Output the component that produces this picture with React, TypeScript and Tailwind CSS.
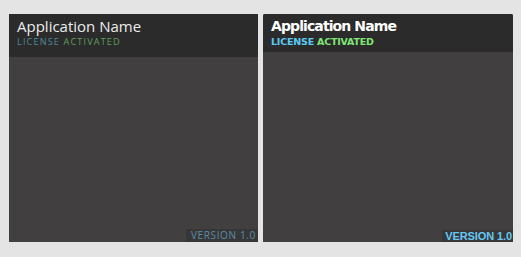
export default function App() {
  return (
    <div className="flex h-[257px] w-[521px] gap-[5px] bg-[#e4e4e4] pl-[9px] pt-[14px]">
      {/* flat skin */}
      <div className="flex h-[228px] w-[249px] flex-col bg-[#413f40]">
        <div className="h-[43px] bg-[#2b2b2b] px-[8px] pt-[2px] font-['Open_Sans',sans-serif]">
          <div className="text-[15px] leading-[20px] text-[#ececec]">Application Name</div>
          <div className="text-[9.2px] leading-[12px] tracking-[1.1px]">
            <span className="text-[#4e8a9a]">LICENSE</span>{" "}
            <span className="text-[#5f9f5d]">ACTIVATED</span>
          </div>
        </div>
        <div className="flex flex-1 items-end justify-end">
          <div className="bg-[#383738] pl-[5px] pr-[2px] font-['Open_Sans',sans-serif] text-[10px] leading-[13px] tracking-[0.65px] text-[#5b8ca8]">
            VERSION 1.0
          </div>
        </div>
      </div>

      {/* bold skin */}
      <div className="flex h-[228px] w-[250px] flex-col overflow-hidden rounded-t-[2px] bg-[#413f40]">
        <div className="h-[38px] bg-[#2b2b2b] px-[8px] pt-[2px] font-['DejaVu_Sans',sans-serif] font-bold">
          <div className="text-[14px] leading-[20px] tracking-[-0.9px] text-white">Application Name</div>
          <div className="text-[9.5px] leading-[12px] tracking-[-0.2px]">
            <span className="text-[#5ccbf2]">LICENSE</span>{" "}
            <span className="text-[#80e676]">ACTIVATED</span>
          </div>
        </div>
        <div className="flex flex-1 items-end justify-end">
          <div className="bg-[#383738] pl-[3px] pr-[1px] font-['Liberation_Sans',sans-serif] text-[11px] font-bold leading-[12px] tracking-[-0.1px] text-[#66c8f4]">
            VERSION 1.0
          </div>
        </div>
      </div>
    </div>
  );
}
